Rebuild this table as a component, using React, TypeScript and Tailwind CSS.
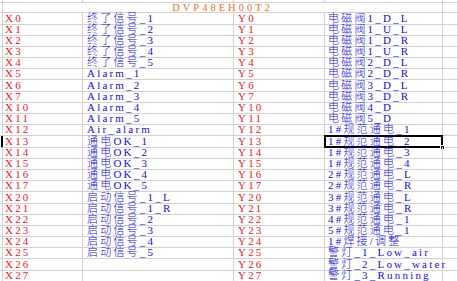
import React from "react";

const bCol = [
  "终了信号_1", "终了信号_2", "终了信号_3", "终了信号_4", "终了信号_5",
  "Alarm_1", "Alarm_2", "Alarm_3", "Alarm_4", "Alarm_5", "Air_alarm",
  "通电OK_1", "通电OK_2", "通电OK_3", "通电OK_4", "通电OK_5",
  "启动信号_1_L", "启动信号_1_R", "启动信号_2", "启动信号_3", "启动信号_4", "启动信号_5",
  "", "",
];

const zCol = [
  "电磁阀1_D_L", "电磁阀1_U_L", "电磁阀1_D_R", "电磁阀1_U_R", "电磁阀2_D_L", "电磁阀2_D_R",
  "电磁阀3_D_L", "电磁阀3_D_R", "电磁阀4_D", "电磁阀5_D",
  "1#规范通电_1", "1#规范通电_2", "1#规范通电_3", "1#规范通电_4",
  "2#规范通电_L", "2#规范通电_R", "3#规范通电_L", "3#规范通电_R",
  "4#规范通电_1", "5#规范通电_1", "1#焊接/调整",
  "警灯_1_Low_air", "警灯_2_Low_water", "警灯_3_Running",
];

const nums = ["0", "1", "2", "3", "4", "5", "6", "7", "10", "11", "12", "13", "14", "15", "16", "17", "20", "21", "22", "23", "24", "25", "26", "27"];

const cell = "border-r border-b border-[#d2d2d2] whitespace-nowrap overflow-visible";

export default function App() {
  return (
    <div className="w-[458px] h-[281px] overflow-hidden bg-white font-['Liberation_Serif','Noto_Sans_CJK_SC',serif] font-light text-[11px] leading-[11px] tracking-[2.2px]">
      {/* top partial row */}
      <div className="grid grid-cols-[3px_80px_151px_91px_118px_15px] h-[2.5px]">
        <div className={cell} />
        <div className={cell} />
        <div className={cell} />
        <div className={cell} />
        <div className={cell} />
        <div className={cell} />
      </div>
      {/* header row */}
      <div className="grid grid-cols-[3px_440px_15px] h-[10px]">
        <div className={cell} />
        <div className={`${cell} flex items-center justify-center text-[#f07020] tracking-[3px] leading-[9px] text-[10.5px]`}>DVP48EH00T2</div>
        <div className={cell} />
      </div>
      {nums.map((n, i) => (
        <div key={n} className="grid grid-cols-[3px_80px_151px_91px_118px_15px] h-[11.2px]">
          <div className={i === 11 ? "border-r-2 border-b border-r-black border-b-[#d2d2d2]" : cell} />
          <div className={`${cell} pl-[2px] text-[#f01818] flex items-center`}>X{n}</div>
          <div className={`${cell} pl-[4px] text-[#1010e0] flex items-center`}>{bCol[i]}</div>
          <div className={`${cell} pl-[4px] text-[#f01818] flex items-center`}>Y{n}</div>
          <div className={`${cell} pl-[3px] text-[#1010e0] flex items-center relative`}>
            <span className="relative z-10">{zCol[i]}</span>
            {i === 11 && (
              <>
                <div className="absolute -left-[1px] -top-[1px] -right-[1px] -bottom-[1px] border-2 border-black" />
                <div className="absolute -right-[3px] -bottom-[3px] w-[5px] h-[5px] bg-black border border-white" />
              </>
            )}
          </div>
          <div className={cell} />
        </div>
      ))}
    </div>
  );
}
